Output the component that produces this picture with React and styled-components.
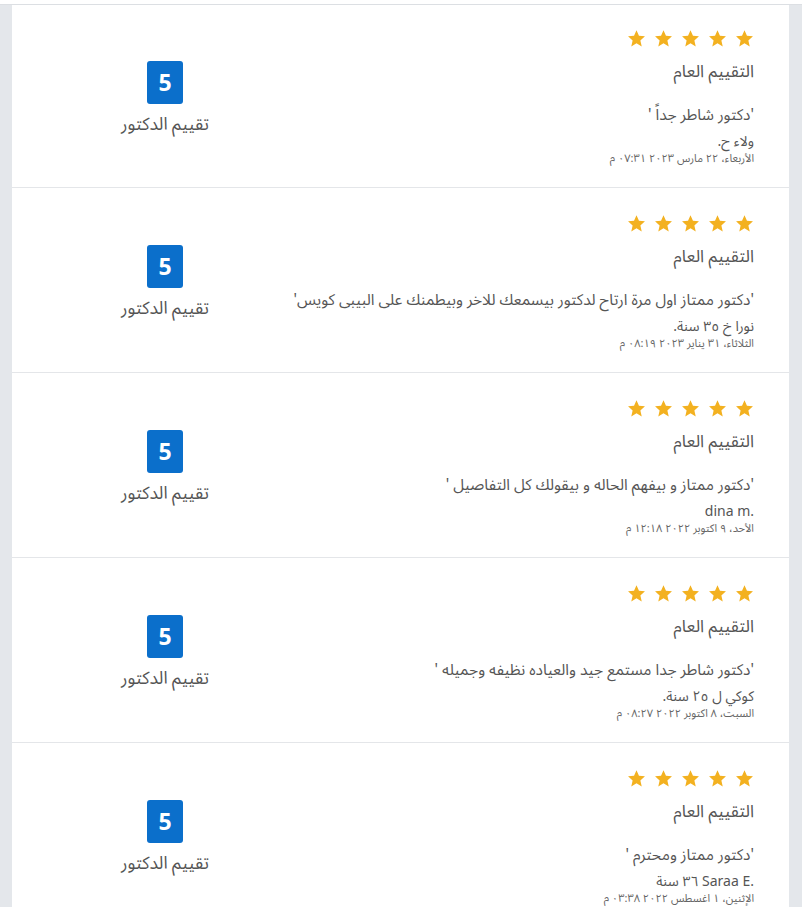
import styled, { createGlobalStyle } from 'styled-components'

const GlobalStyle = createGlobalStyle`
    body {
        margin: 0;
        background: #e4e7eb;
        font-family: "Noto Sans Arabic", "DejaVu Sans", "Noto Sans", sans-serif;
    }
`

const reviews = [
    {
        comment: "'دكتور شاطر جداً '",
        name: 'ولاء ح.',
        date: 'الأربعاء، ٢٢ مارس ٢٠٢٣ ٠٧:٣١ م',
    },
    {
        comment: "'دكتور ممتاز اول مرة ارتاح لدكتور بيسمعك للاخر وبيطمنك على البيبى كويس'",
        name: 'نورا خ ٣٥ سنة.',
        date: 'الثلاثاء، ٣١ يناير ٢٠٢٣ ٠٨:١٩ م',
    },
    {
        comment: "'دكتور ممتاز و بيفهم الحاله و بيقولك كل التفاصيل '",
        name: <bdi dir="ltr">dina m.</bdi>,
        date: 'الأحد، ٩ اكتوبر ٢٠٢٢ ١٢:١٨ م',
    },
    {
        comment: "'دكتور شاطر جدا مستمع جيد والعياده نظيفه وجميله '",
        name: 'كوكي ل ٢٥ سنة.',
        date: 'السبت، ٨ اكتوبر ٢٠٢٢ ٠٨:٢٧ م',
    },
    {
        comment: "'دكتور ممتاز ومحترم '",
        name: <><bdi dir="ltr">Saraa E.</bdi> ٣٦ سنة</>,
        date: 'الإثنين، ١ اغسطس ٢٠٢٢ ٠٣:٣٨ م',
    },
]

const TopBar = styled.div`
    height: 4px;
    background: #fff;
    border-bottom: 1px solid #dcdfe3;
`

const Page = styled.div`
    padding: 0 13px 0 12px;
`

const Card = styled.div`
    background: #fff;
`

const Row = styled.div`
    display: flex;
    direction: rtl;
    height: 184px;
    border-bottom: 1px solid #e4e6e9;

    &:first-child {
        height: 182px;
    }
`

const Body = styled.div`
    flex: 1;
    min-width: 0;
    padding: 26px 35px 0 0;
    color: #555;

    ${Row}:first-child & {
        padding-top: 24px;
    }
`

const Stars = styled.div`
    display: flex;
    gap: 8px;
    height: 19px;
`

const Title = styled.div`
    margin-top: 13px;
    font-size: 17px;
    line-height: 22px;
    color: #555;
`

const Comment = styled.div`
    margin-top: 21px;
    font-size: 15.5px;
    line-height: 22px;
    color: #555;
    white-space: nowrap;
`

const Name = styled.div`
    margin-top: 6px;
    font-size: 14px;
    line-height: 19px;
    color: #555;
`

const Date = styled.div`
    font-size: 11px;
    line-height: 15px;
    color: #666;
`

const Score = styled.div`
    width: 306px;
    display: flex;
    flex-direction: column;
    align-items: center;
    justify-content: center;
    padding-top: 4px;
`

const Badge = styled.div`
    width: 36px;
    height: 43px;
    border-radius: 3px;
    background: #0b6fcb;
    color: #fff;
    font-family: "Open Sans", "Noto Sans", sans-serif;
    font-weight: 700;
    font-size: 23px;
    display: flex;
    align-items: center;
    justify-content: center;
`

const ScoreLabel = styled.div`
    margin-top: 10px;
    font-size: 17.5px;
    line-height: 22px;
    color: #555;
`

const Star = () => (
    <svg width="19" height="19" viewBox="0 0 24 24">
        <path
            fill="#f3b120"
            d="M12 1.5l3.1 7.1 7.6.7-5.8 5.1 1.7 7.6L12 18l-6.6 4 1.7-7.6-5.8-5.1 7.6-.7z"
        />
    </svg>
)

const App = () => {
    return (
        <>
            <GlobalStyle />
            <TopBar />
            <Page>
                <Card>
                    {reviews.map((r, i) => (
                        <Row key={i}>
                            <Body>
                                <Stars>
                                    {[0, 1, 2, 3, 4].map(n => <Star key={n} />)}
                                </Stars>
                                <Title>التقييم العام</Title>
                                <Comment>{r.comment}</Comment>
                                <Name>{r.name}</Name>
                                <Date>{r.date}</Date>
                            </Body>
                            <Score>
                                <Badge>5</Badge>
                                <ScoreLabel>تقييم الدكتور</ScoreLabel>
                            </Score>
                        </Row>
                    ))}
                </Card>
            </Page>
        </>
    )
}

export default App
